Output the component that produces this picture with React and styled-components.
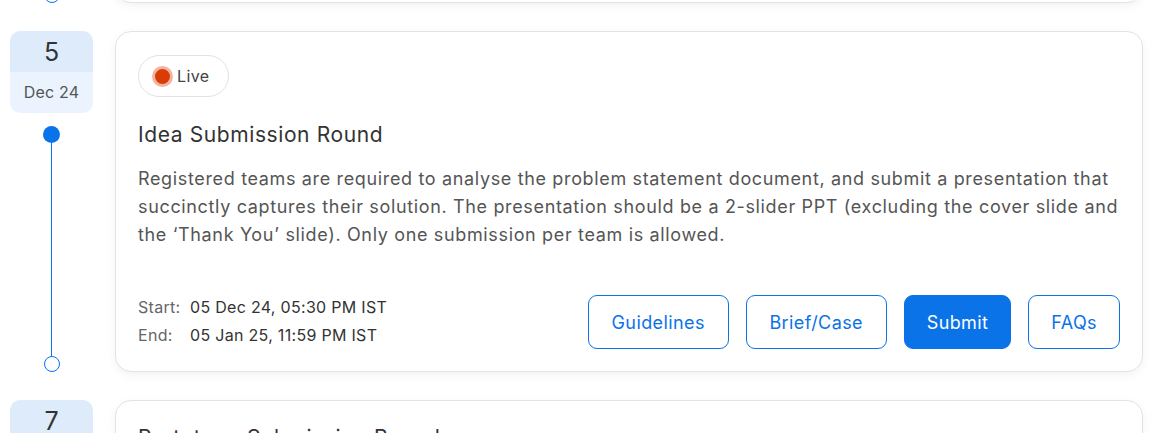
import styled, { createGlobalStyle } from 'styled-components';

const rounds = [
  {
    day: '3',
    month: 'Nov 24',
    title: 'Registration',
    description: 'Teams register for the challenge.',
    start: '03 Nov 24, 10:00 AM IST',
    end: '04 Dec 24, 11:59 PM IST',
    actions: [],
  },
  {
    day: '5',
    month: 'Dec 24',
    live: true,
    title: 'Idea Submission Round',
    description:
      'Registered teams are required to analyse the problem statement document, and submit a presentation that succinctly captures their solution. The presentation should be a 2-slider PPT (excluding the cover slide and the ‘Thank You’ slide). Only one submission per team is allowed.',
    start: '05 Dec 24, 05:30 PM IST',
    end: '05 Jan 25, 11:59 PM IST',
    actions: [
      { label: 'Guidelines', wide: true },
      { label: 'Brief/Case', wide: true },
      { label: 'Submit', primary: true },
      { label: 'FAQs' },
    ],
  },
  {
    day: '7',
    month: 'Jan 25',
    title: 'Prototype Submission Round',
    description:
      'Shortlisted teams will build a working prototype of their proposed solution and submit it for evaluation.',
    start: '07 Jan 25, 10:00 AM IST',
    end: '20 Jan 25, 11:59 PM IST',
    actions: [],
  },
];

const Row = ({ round }) => (
  <RowWrap>
    <Rail>
      <DateBadge>
        <Day>{round.day}</Day>
        <Month>{round.month}</Month>
      </DateBadge>
      <Dot />
      <Line />
      <EndRing />
    </Rail>
    <Card>
      {round.live && (
        <LivePill>
          <LiveDot />
          Live
        </LivePill>
      )}
      <Title>{round.title}</Title>
      <Description>{round.description}</Description>
      <Footer>
        <Dates>
          <DateLine>
            <DateLabel>Start:</DateLabel>
            <DateValue>{round.start}</DateValue>
          </DateLine>
          <DateLine>
            <DateLabel>End:</DateLabel>
            <DateValue>{round.end}</DateValue>
          </DateLine>
        </Dates>
        <Actions>
          {round.actions.map((a) => (
            <ActionButton key={a.label} $primary={a.primary} $wide={a.wide}>
              {a.label}
            </ActionButton>
          ))}
        </Actions>
      </Footer>
    </Card>
  </RowWrap>
);

const App = () => {
  const [prev, current, next] = rounds;
  return (
    <>
      <GlobalStyle />
      <Viewport>
        <PrevClip>
          <Row round={prev} />
        </PrevClip>
        <Row round={current} />
        <Row round={next} />
      </Viewport>
    </>
  );
};

export default App;

const GlobalStyle = createGlobalStyle`
  html, body {
    margin: 0;
    padding: 0;
    background: #ffffff;
    font-family: Inter, "Noto Sans", sans-serif;
  }
`;

const Viewport = styled.div`
  height: 433px;
  overflow: hidden;
  display: flex;
  flex-direction: column;
  gap: 28px;
  padding: 0 20px 0 10px;
`;

// previous round: only its last few pixels show above the fold
const PrevClip = styled.div`
  height: 3px;
  flex-shrink: 0;
  display: flex;
  flex-direction: column;
  justify-content: flex-end;
  clip-path: inset(0 -20px -30px -20px);
`;

const RowWrap = styled.div`
  display: grid;
  grid-template-columns: 83px 1fr;
  column-gap: 22px;
  align-items: stretch;
  flex-shrink: 0;
`;

const Rail = styled.div`
  display: flex;
  flex-direction: column;
  align-items: center;
`;

const DateBadge = styled.div`
  width: 83px;
  border-radius: 10px;
  overflow: hidden;
  display: flex;
  flex-direction: column;
  text-align: center;
`;

const Day = styled.div`
  height: 41px;
  line-height: 42px;
  background: #ddebfb;
  color: #333333;
  font-size: 25px;
`;

const Month = styled.div`
  height: 41px;
  line-height: 40px;
  background: #ebf4fe;
  color: #555555;
  font-size: 16px;
  letter-spacing: 0.2px;
`;

const Dot = styled.div`
  width: 17px;
  height: 17px;
  margin-top: 13px;
  border-radius: 50%;
  background: #0a73e8;
  flex-shrink: 0;
`;

const Line = styled.div`
  width: 1px;
  flex: 1;
  background: #0a73e8;
  margin-right: 1px;
`;

const EndRing = styled.div`
  width: 16px;
  height: 16px;
  box-sizing: border-box;
  border: 1px solid #0a73e8;
  border-radius: 50%;
  background: #ffffff;
  flex-shrink: 0;
`;

const Card = styled.div`
  border: 1px solid #e3e3e3;
  border-radius: 16px;
  background: #ffffff;
  box-shadow: 0 3px 10px rgba(0, 0, 0, 0.05);
  padding: 23px 22px 22px 22px;
  display: flex;
  flex-direction: column;
  align-items: flex-start;
  min-width: 0;
`;

const LivePill = styled.div`
  display: inline-flex;
  align-items: center;
  gap: 4px;
  height: 42px;
  box-sizing: border-box;
  padding: 0 18px 0 13px;
  border: 1px solid #e2e2e2;
  border-radius: 21px;
  color: #444444;
  font-size: 16px;
  letter-spacing: 0.4px;
  margin-bottom: 24px;
`;

const LiveDot = styled.span`
  width: 21px;
  height: 21px;
  box-sizing: border-box;
  border-radius: 50%;
  border: 3px solid #f2b4a1;
  background: #d93d06;
`;

const Title = styled.h3`
  margin: 0 0 16px 0;
  font-size: 21px;
  font-weight: 400;
  line-height: 28px;
  letter-spacing: 0.6px;
  color: #333333;
`;

const Description = styled.p`
  margin: 0;
  font-size: 18px;
  line-height: 28px;
  letter-spacing: 0.65px;
  color: #555555;
`;

const Footer = styled.div`
  align-self: stretch;
  display: flex;
  justify-content: space-between;
  align-items: flex-end;
  margin-top: 44px;
`;

const Dates = styled.div`
  display: flex;
  flex-direction: column;
`;

const DateLine = styled.div`
  display: flex;
  font-size: 16px;
  line-height: 28px;
  letter-spacing: 0.3px;
`;

const DateLabel = styled.span`
  width: 52px;
  color: #666666;
`;

const DateValue = styled.span`
  color: #333333;
`;

const Actions = styled.div`
  display: flex;
  gap: 17px;
`;

const ActionButton = styled.button`
  height: 54px;
  min-width: ${({ $wide }) => ($wide ? '141px' : '0')};
  padding: 0 22px;
  border-radius: 9px;
  border: 1px solid #0a73e8;
  background: ${({ $primary }) => ($primary ? '#0a73e8' : '#ffffff')};
  color: ${({ $primary }) => ($primary ? '#ffffff' : '#0a73e8')};
  font-family: Inter, "Noto Sans", sans-serif;
  font-size: 18px;
  letter-spacing: 0.4px;
  cursor: pointer;
`;
